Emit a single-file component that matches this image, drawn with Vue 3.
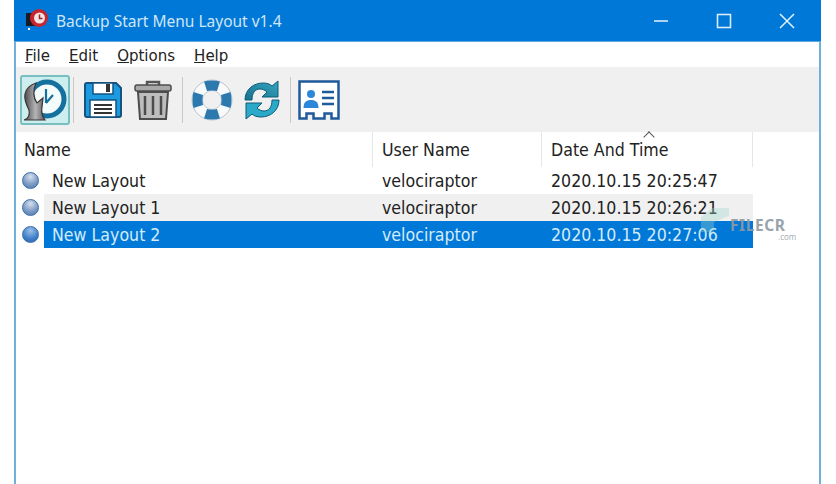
<script setup>
const menus = [
  { key: 'F', rest: 'ile' },
  { key: 'E', rest: 'dit' },
  { key: 'O', rest: 'ptions' },
  { key: 'H', rest: 'elp' }
]
const rows = [
  { name: 'New Layout', date: '2020.10.15 20:25:47', cls: '' },
  { name: 'New Layout 1', date: '2020.10.15 20:26:21', cls: 'alt' },
  { name: 'New Layout 2', date: '2020.10.15 20:27:06', cls: 'sel' }
]
</script>

<template>
  <div class="page">
    <div class="window">
      <header class="titlebar">
        <svg class="appicon" width="26" height="26" viewBox="0 0 26 26">
          <rect x="1" y="7" width="9" height="13" fill="#1a1a22" />
          <circle cx="14" cy="12" r="9" fill="#c8242c" />
          <circle cx="14.500" cy="12" r="5.500" fill="#f0e4e4" />
          <path d="M14.500 8.500v4h3" fill="none" stroke="#a02028" stroke-width="1.500" />
          <rect x="3" y="22" width="2" height="2" fill="#fff" />
        </svg>
        <span class="title">Backup Start Menu Layout v1.4</span>
        <div class="controls">
          <svg width="16" height="16" viewBox="0 0 16 16"><path d="M1 8h14" stroke="#d8ecfa" stroke-width="1.600" /></svg>
          <svg width="16" height="16" viewBox="0 0 16 16"><rect x="1.500" y="1.500" width="13" height="13" fill="none" stroke="#d8ecfa" stroke-width="1.600" /></svg>
          <svg width="16" height="16" viewBox="0 0 16 16"><path d="M1 1l14 14M15 1L1 15" stroke="#e4f2fc" stroke-width="1.500" /></svg>
        </div>
      </header>

      <nav class="menubar">
        <span v-for="m in menus" :key="m.key" class="menu"><u>{{ m.key }}</u>{{ m.rest }}</span>
      </nav>

      <div class="toolbar">
        <button class="tool active">
          <svg width="46" height="44" viewBox="0 0 46 44">
            <defs>
              <linearGradient id="trunk" x1="0" x2="1" y1="0" y2="0">
                <stop offset="0" stop-color="#4a4546" />
                <stop offset=".55" stop-color="#b4b4b6" />
                <stop offset="1" stop-color="#5c5a5c" />
              </linearGradient>
            </defs>
            <circle cx="25" cy="21" r="17" fill="#f4fbfb" stroke="#14709f" stroke-width="5" />
            <path d="M2 42C6 41 8 37 7 32 4 26 2 21 3 16 4 11 8 7 14 5 11 11 11 20 15 25L21 20 20 29C19 34 20 38 23 42Z" fill="url(#trunk)" stroke="#3a3536" stroke-width="1.200" />
            <path d="M24 25V11M24 25l7-8" stroke="#14709f" stroke-width="2.200" fill="none" />
          </svg>
        </button>
        <span class="sep sep-a"></span>
        <svg class="ico save" width="40" height="40" viewBox="0 0 40 40">
          <path d="M2 5a2 2 0 0 1 2-2h29l5 5v27a2 2 0 0 1-2 2H4a2 2 0 0 1-2-2z" fill="#1d9be0" stroke="#17537f" stroke-width="2" />
          <rect x="10" y="3" width="20" height="11" fill="#fff" stroke="#17537f" stroke-width="1.500" />
          <rect x="23" y="4" width="4" height="8" fill="#333" />
          <rect x="7" y="20" width="26" height="17" fill="#fff" stroke="#17537f" stroke-width="1.500" />
          <path d="M11 25h18M11 29h18M11 33h18" stroke="#333" stroke-width="1.800" />
        </svg>
        <svg class="ico trash" width="40" height="42" viewBox="0 0 40 42">
          <path d="M14 6V3h12v3" fill="none" stroke="#555" stroke-width="2.500" />
          <rect x="2" y="6" width="36" height="6" rx="2" fill="#a8a8a8" stroke="#4c4c4c" stroke-width="1.500" />
          <path d="M5 13h30l-2 27H7z" fill="#bdbdbd" stroke="#4c4c4c" stroke-width="2" />
          <path d="M12 17v19M20 17v19M28 17v19" stroke="#4c4c4c" stroke-width="2.500" />
        </svg>
        <span class="sep sep-b"></span>
        <svg class="ico ring" width="42" height="42" viewBox="0 0 42 42">
          <circle cx="21" cy="21" r="20" fill="#f8fafb" stroke="#b8c4cc" stroke-width="1" />
          <circle cx="21" cy="21" r="9.500" fill="#f0f0f0" stroke="#c4ccd2" stroke-width="1" />
          <path d="M13 2.500Q21 .5 29 2.500L26 12Q21 10.800 16 12zM13 39.500Q21 41.500 29 39.500L26 30Q21 31.200 16 30zM2.500 13Q.5 21 2.500 29L12 26Q10.800 21 12 16zM39.500 13Q41.500 21 39.500 29L30 26Q31.200 21 30 16z" fill="#2c79b0" />
        </svg>
        <svg class="ico sync" width="38" height="40" viewBox="0 0 38 40">
          <defs>
            <linearGradient id="syncA" x1="0" x2="1" y1="1" y2="0">
              <stop offset="0" stop-color="#17708e" />
              <stop offset="1" stop-color="#35a5c0" />
            </linearGradient>
          </defs>
          <path d="M2 20C2 9 11 3 20 3c4 0 7 1 9 3l6-5v16H19l5-5c-2-2-5-3-7-3-5 0-8 4-8 11z" fill="url(#syncA)" stroke="#0f5c78" stroke-width="1" />
          <path d="M36 20c0 11-9 17-18 17-4 0-7-1-9-3l-6 5V23h16l-5 5c2 2 5 3 7 3 5 0 8-4 8-11z" fill="#2aa9c9" stroke="#0f5c78" stroke-width="1" />
        </svg>
        <span class="sep sep-c"></span>
        <svg class="ico card" width="42" height="40" viewBox="0 0 42 40">
          <path d="M1.500 1.500h39v37h-7v-5h-7v5h-11v-5h-7v5h-7z" fill="#fff" stroke="#1f5a9a" stroke-width="2.500" />
          <circle cx="13" cy="14" r="4" fill="#2d87d8" />
          <path d="M5.500 28c0-6 3-8 7.500-8s7.500 2 7.500 8z" fill="#2d87d8" />
          <path d="M24 12h12M24 18h12M24 24h12" stroke="#1f5a9a" stroke-width="2.400" />
        </svg>
      </div>

      <div class="list">
        <div class="thead">
          <div class="th">Name</div>
          <div class="th">User Name</div>
          <div class="th">Date And Time<i class="sort"></i></div>
        </div>
        <div v-for="r in rows" :key="r.name" class="row" :class="r.cls">
          <span class="ball"></span>
          <div class="cells">
            <div class="cell first">{{ r.name }}</div>
            <div class="cell">velociraptor</div>
            <div class="cell">{{ r.date }}</div>
          </div>
        </div>
        <div class="mark">
          <svg width="30" height="26" viewBox="0 0 30 26"><path d="M1 25V10L12 1h17v8L14 15v10z" fill="#9fd8c8" opacity=".35" /></svg>
          <span class="mark-t">FILECR</span>
          <span class="mark-c">.com</span>
        </div>
      </div>
    </div>
  </div>
</template>

<style>
html, body { margin: 0; background: #fff; }
</style>

<style scoped>
.page {
  width: 836px;
  height: 484px;
  overflow: hidden;
  padding-left: 14px;
  box-sizing: border-box;
  background: #fff;
  font-family: "DejaVu Sans Condensed", "DejaVu Sans", sans-serif;
  color: #222;
}
.window {
  width: 807px;
  height: 484px;
  box-sizing: border-box;
  border-left: 2px solid #72b0dc;
  border-right: 2px solid #72b0dc;
  background: #fff;
  position: relative;
}
.titlebar {
  height: 41px;
  margin: 0 -2px;
  background: #0078d7;
  display: flex;
  align-items: center;
  padding-left: 11px;
  border-bottom: 1px solid #5aa8e4;
}
.appicon { margin-top: -4px; }
.title {
  margin-left: 5px;
  font-family: "Noto Sans", sans-serif;
  font-size: 15.500px;
  color: #cfe6f8;
  white-space: nowrap;
}
.controls {
  margin-left: auto;
  display: flex;
  align-items: center;
  padding-right: 26px;
  gap: 47px;
}
.menubar {
  height: 25px;
  display: flex;
  align-items: center;
  padding-left: 9px;
  gap: 19px;
  font-size: 16.700px;
}
.menu { white-space: nowrap; }
.toolbar {
  height: 65px;
  background: #f0f0f0;
  display: flex;
  align-items: center;
  padding-left: 4px;
}
.tool {
  width: 50px;
  height: 50px;
  padding: 0;
  border: 2px solid #79bfbf;
  border-radius: 3px;
  background: #cdeeee;
  display: flex;
  align-items: center;
  justify-content: center;
}
.sep { width: 1px; height: 46px; background: #c8c8c8; }
.sep-a { margin-left: 3px; }
.save { margin-left: 9px; }
.trash { margin-left: 10px; }
.sep-b { margin-left: 9px; }
.ring { margin-left: 8px; }
.sync { margin-left: 10px; }
.sep-c { margin-left: 9px; }
.card { margin-left: 7px; }
.list { position: relative; }
.thead {
  height: 35px;
  display: grid;
  grid-template-columns: 357px 169px 211px;
  width: 737px;
}
.th {
  font-size: 17.600px;
  padding: 8px 0 0 8px;
  border-right: 1px solid #e6e6e6;
  position: relative;
  white-space: nowrap;
}
.th:nth-child(n+2) { padding-left: 9px; }
.sort {
  position: absolute;
  left: 103px;
  top: 1px;
  width: 7px;
  height: 7px;
  border-left: 1px solid #555;
  border-top: 1px solid #555;
  transform: rotate(45deg);
}
.row {
  height: 27px;
  width: 737px;
  display: flex;
  align-items: center;
  position: relative;
  font-size: 17.600px;
}
.ball {
  flex: none;
  width: 17px;
  height: 17px;
  margin: -1px 5px 0 6px;
  border-radius: 50%;
  border: 1px solid #3a6ea8;
  box-sizing: border-box;
  background: radial-gradient(circle at 50% 25%, #d6e0ee, #7f9cc4 55%, #4a78b0);
}
.cells {
  flex: 1;
  height: 27px;
  display: grid;
  grid-template-columns: 329px 169px 211px;
  align-items: center;
}
.cell { white-space: nowrap; padding-left: 9px; }
.cell.first { padding-left: 8px; }
.alt .cells { background: #f0f0f0; }
.sel .cells { background: #0078d7; color: #d4ebfb; }
.sel .ball { background: radial-gradient(circle at 50% 25%, #9cc0e8, #3f7fc8 60%, #2a64aa); }
.mark {
  position: absolute;
  left: 684px;
  top: 75px;
  width: 110px;
  height: 40px;
}
.mark svg { position: absolute; left: 0; top: 0; }
.mark-t {
  position: absolute;
  left: 30px;
  top: 12px;
  font-family: "Noto Sans", sans-serif;
  font-size: 15.500px;
  line-height: 13px;
  font-weight: 700;
  color: #8f9aa2;
  opacity: .9;
  letter-spacing: .6px;
}
.mark-c {
  position: absolute;
  left: 78px;
  top: 26px;
  font-family: "Noto Sans", sans-serif;
  font-size: 8px;
  line-height: 8px;
  color: #aab0b4;
}
</style>
